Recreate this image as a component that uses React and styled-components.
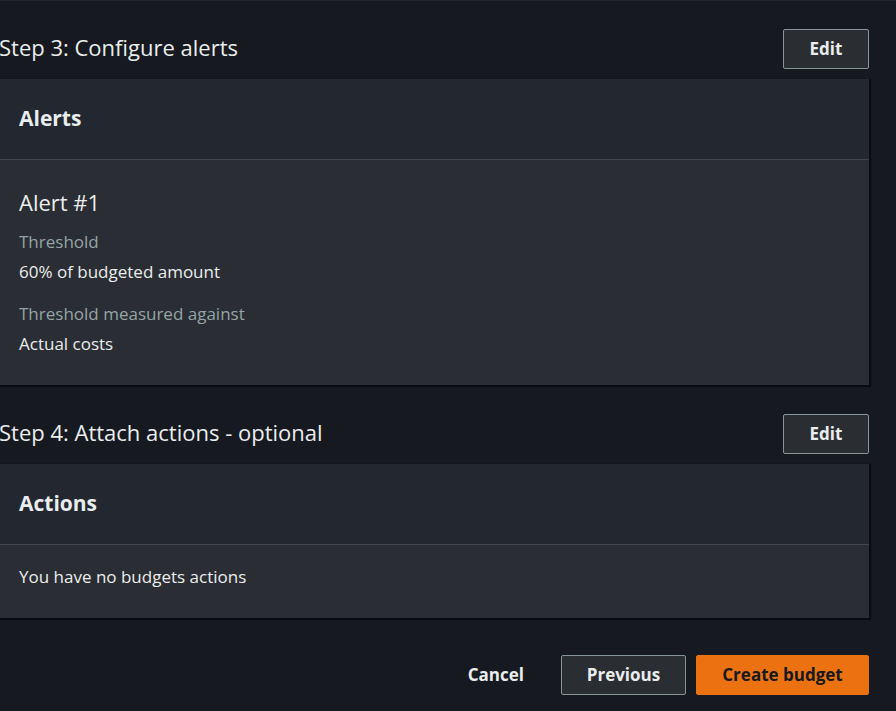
import React from "react";
import styled, { createGlobalStyle } from "styled-components";

const GlobalStyle = createGlobalStyle`
    html, body {
        margin: 0;
        padding: 0;
        background-color: #16191f;
    }
    body {
        font-family: "Open Sans", "Noto Sans", sans-serif;
        color: #eaeded;
    }
`;

const Page = styled.div`
    border-top: 1px solid #21252c;
    padding: 28px 27px 16px 0;
    margin-left: -1px;
`;

const Step = styled.section`
    margin-bottom: 29px;
`;

const StepHeader = styled.div`
    display: flex;
    align-items: center;
    justify-content: space-between;
    height: 40px;
    margin-bottom: 10px;
`;

const StepTitle = styled.h2`
    margin: 0;
    padding-bottom: 4px;
    font-size: 22px;
    font-weight: 400;
    line-height: 28px;
    color: #eaeded;
`;

const Button = styled.button`
    font-family: inherit;
    font-size: 17px;
    font-weight: 700;
    line-height: 22px;
    height: 40px;
    padding: 0 20px;
    border-radius: 2px;
    cursor: pointer;
    border: 1px solid ${(p) => (p.primary ? "#ec7211" : p.link ? "transparent" : "#879596")};
    background-color: ${(p) => (p.primary ? "#ec7211" : p.link ? "transparent" : "#2a2e33")};
    color: ${(p) => (p.primary ? "#16191f" : "#eaeded")};
    width: ${(p) => p.width || "auto"};
`;

const Card = styled.div`
    background-color: #2a2d33;
    box-shadow: 1px 1px 1px 1px rgba(0, 0, 0, 0.55);
`;

const CardHeader = styled.div`
    display: flex;
    align-items: center;
    box-sizing: border-box;
    height: 81px;
    padding: 0 20px 3px 20px;
    background-color: #232730;
    border-bottom: 1px solid #414750;
`;

const CardTitle = styled.h3`
    margin: 0;
    font-size: 21px;
    font-weight: 700;
    line-height: 28px;
    color: #eaeded;
`;

const CardBody = styled.div`
    padding: ${(p) => p.pad || "20px"} 20px 30px 20px;
`;

const AlertTitle = styled.h4`
    margin: 0 0 15px 0;
    font-size: 22px;
    font-weight: 500;
    line-height: 28px;
    color: #eaeded;
`;

const Field = styled.div`
    display: flex;
    flex-direction: column;
    gap: 8px;
    & + & {
        margin-top: 20px;
    }
`;

const Label = styled.div`
    font-size: 17px;
    line-height: 22px;
    color: #95a5a6;
`;

const Value = styled.div`
    font-size: 17px;
    line-height: 22px;
    color: #eaeded;
`;

const Footer = styled.div`
    display: flex;
    justify-content: flex-end;
    align-items: center;
    gap: 10px;
    margin-top: 37px;
`;

const LinkButton = styled(Button)`
    margin-right: 6px;
`;

export default function App() {
    return (
        <>
            <GlobalStyle />
            <Page>
                <Step>
                    <StepHeader>
                        <StepTitle>Step 3: Configure alerts</StepTitle>
                        <Button width="86px">Edit</Button>
                    </StepHeader>
                    <Card>
                        <CardHeader>
                            <CardTitle>Alerts</CardTitle>
                        </CardHeader>
                        <CardBody pad="28px">
                            <AlertTitle>Alert #1</AlertTitle>
                            <Field>
                                <Label>Threshold</Label>
                                <Value>60% of budgeted amount</Value>
                            </Field>
                            <Field>
                                <Label>Threshold measured against</Label>
                                <Value>Actual costs</Value>
                            </Field>
                        </CardBody>
                    </Card>
                </Step>
                <Step>
                    <StepHeader>
                        <StepTitle>Step 4: Attach actions - optional</StepTitle>
                        <Button width="86px">Edit</Button>
                    </StepHeader>
                    <Card>
                        <CardHeader>
                            <CardTitle>Actions</CardTitle>
                        </CardHeader>
                        <CardBody pad="21px">
                            <Value>You have no budgets actions</Value>
                        </CardBody>
                    </Card>
                </Step>
                <Footer>
                    <LinkButton link>Cancel</LinkButton>
                    <Button width="125px">Previous</Button>
                    <Button primary width="173px">Create budget</Button>
                </Footer>
            </Page>
        </>
    );
}
